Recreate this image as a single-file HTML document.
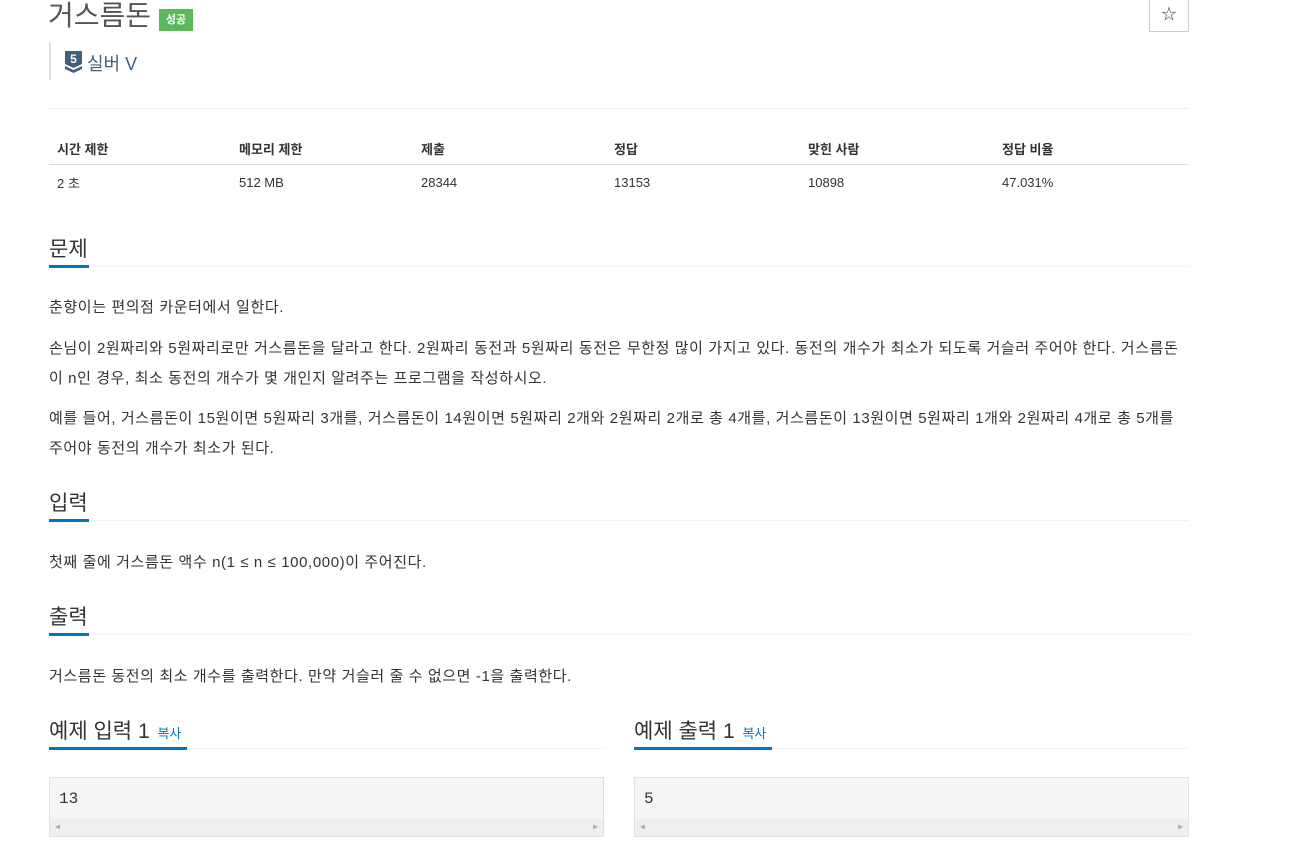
<!DOCTYPE html><html><head><meta charset="utf-8"><style>
body{margin:0;width:1294px;height:864px;overflow:hidden;background:#fff;font-family:"Liberation Sans","Noto Sans CJK KR",sans-serif;color:#333;position:relative}
.a{position:absolute}
.h{position:absolute;left:49px;width:1140px;font-size:21px;color:#333;border-bottom:1px dotted #e6e6e6;height:33px}
.h span.u{position:absolute;left:0;bottom:-2px;height:3px;background:#0076c0}
p{margin:0;position:absolute;left:49px;width:1160px;font-size:15px;line-height:30px;color:#333;letter-spacing:0.6px}
th,td{text-align:left;font-size:13px;padding:0 8px}
.pre{position:absolute;width:553px;height:58px;border:1px solid #e1e1e8;background:#f5f5f7;font-family:"Liberation Mono",monospace;font-size:16px}
.pre .t{position:absolute;left:9px;top:12px;color:#333}
.pre .s{position:absolute;left:0;right:0;bottom:0;height:17px;background:#efefef;font-size:8px;color:#aaa}
</style></head><body>
<div class="a" style="left:48px;top:-6px;font-size:28px;color:#555">거스름돈</div>
<div class="a" style="left:159px;top:9px;width:34px;height:22px;background:#5cb85c;color:#fff;font-size:11px;font-weight:bold;text-align:center;line-height:22px">성공</div>
<div class="a" style="left:1149px;top:-1px;width:38px;height:31px;border:1px solid #ccc;text-align:center;line-height:30px;font-size:15px">☆</div>
<div class="a" style="left:49px;top:42px;width:2px;height:38px;background:#dbe4ec"></div>
<svg class="a" style="left:65px;top:51px" width="18" height="22" viewBox="0 0 18 22"><path d="M0 0H17V13L8.5 17L0 13Z" fill="#435f7a"/><path d="M0 15L8.5 19L17 15V18L8.5 22L0 18Z" fill="#435f7a"/><text x="8.5" y="12" fill="#fff" font-size="12" font-weight="bold" text-anchor="middle" font-family="Liberation Sans">5</text></svg>
<div class="a" style="left:87px;top:50px;font-size:18px;color:#435f7a">실버 V</div>
<div class="a" style="left:49px;top:108px;width:1140px;border-top:1px solid #eee"></div>
<table class="a" style="left:49px;top:134px;width:1140px;border-collapse:collapse">
<tr style="height:30px;border-bottom:1px solid #ddd"><th style="width:166px">시간 제한</th><th style="width:166px">메모리 제한</th><th style="width:177px">제출</th><th style="width:178px">정답</th><th style="width:178px">맞힌 사람</th><th>정답 비율</th></tr>
<tr style="height:36px"><td>2 초</td><td>512 MB</td><td>28344</td><td>13153</td><td>10898</td><td>47.031%</td></tr></table>
<div class="h" style="top:233px">문제<span class="u" style="width:40px"></span></div>
<p style="top:293px">춘향이는 편의점 카운터에서 일한다.</p>
<p style="top:334px">손님이 2원짜리와 5원짜리로만 거스름돈을 달라고 한다. 2원짜리 동전과 5원짜리 동전은 무한정 많이 가지고 있다. 동전의 개수가 최소가 되도록 거슬러 주어야 한다. 거스름돈<br>이 n인 경우, 최소 동전의 개수가 몇 개인지 알려주는 프로그램을 작성하시오.</p>
<p style="top:404px">예를 들어, 거스름돈이 15원이면 5원짜리 3개를, 거스름돈이 14원이면 5원짜리 2개와 2원짜리 2개로 총 4개를, 거스름돈이 13원이면 5원짜리 1개와 2원짜리 4개로 총 5개를<br>주어야 동전의 개수가 최소가 된다.</p>
<div class="h" style="top:487px">입력<span class="u" style="width:40px"></span></div>
<p style="top:548px">첫째 줄에 거스름돈 액수 n(1 ≤ n ≤ 100,000)이 주어진다.</p>
<div class="h" style="top:601px">출력<span class="u" style="width:40px"></span></div>
<p style="top:662px">거스름돈 동전의 최소 개수를 출력한다. 만약 거슬러 줄 수 없으면 -1을 출력한다.</p>
<div class="h" style="top:715px;width:555px">예제 입력 1 <span style="font-size:13px;color:#0076c0;margin-left:2px">복사</span><span class="u" style="width:138px"></span></div>
<div class="h" style="top:715px;left:634px;width:555px">예제 출력 1 <span style="font-size:13px;color:#0076c0;margin-left:2px">복사</span><span class="u" style="width:138px"></span></div>
<div class="pre" style="left:49px;top:777px"><span class="t">13</span><div class="s"><span style="position:absolute;left:5px;top:3px">◀</span><span style="position:absolute;right:5px;top:3px">▶</span></div></div>
<div class="pre" style="left:634px;top:777px"><span class="t">5</span><div class="s"><span style="position:absolute;left:5px;top:3px">◀</span><span style="position:absolute;right:5px;top:3px">▶</span></div></div>
</body></html>
